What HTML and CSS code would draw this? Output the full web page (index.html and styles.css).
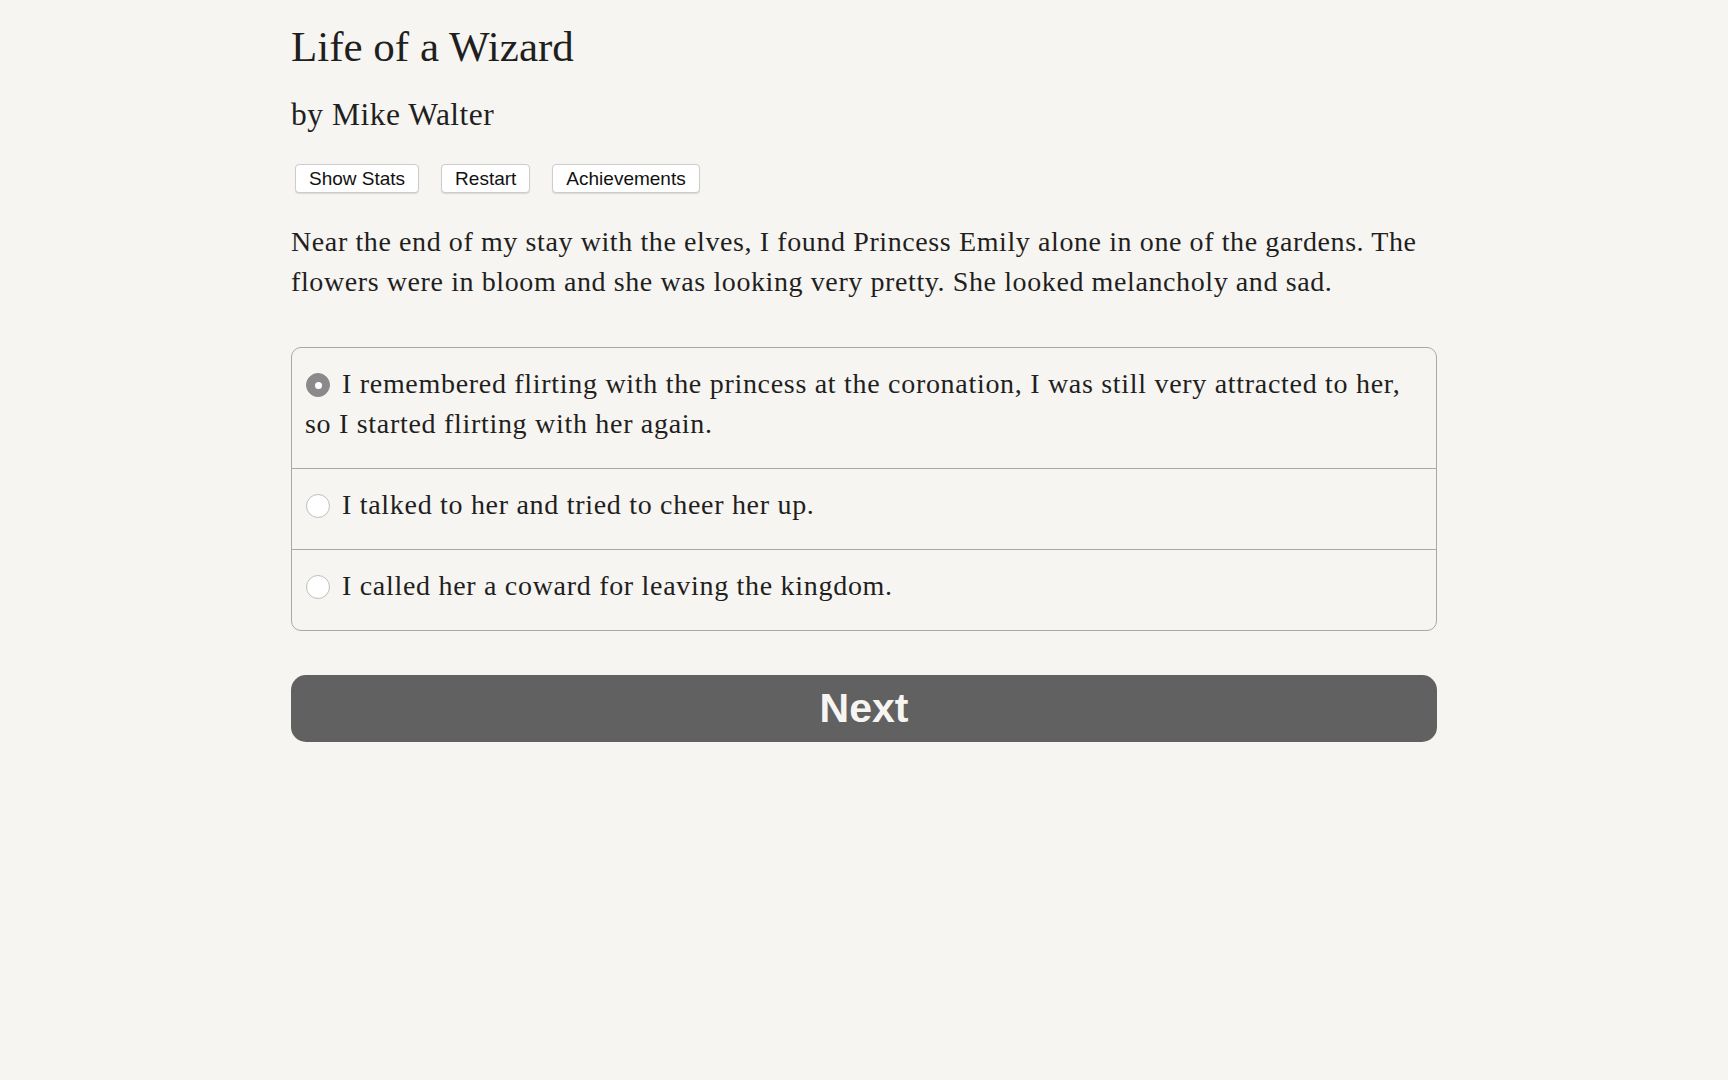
FILE: index.html
```html
<!DOCTYPE html>
<html lang="en">
<head>
<meta charset="utf-8">
<title>Life of a Wizard</title>
<link rel="stylesheet" href="styles.css">
</head>
<body>
<main class="page">
  <h1 class="title">Life of a Wizard</h1>
  <h2 class="author">by Mike Walter</h2>
  <div class="toolbar">
    <button class="tool-btn">Show Stats</button>
    <button class="tool-btn">Restart</button>
    <button class="tool-btn">Achievements</button>
  </div>
  <p class="story">Near the end of my stay with the elves, I found Princess Emily alone in one of the gardens. The flowers were in bloom and she was looking very pretty. She looked melancholy and sad.</p>
  <form class="choices">
    <label class="choice"><span class="radio checked"></span>I remembered flirting with the princess at the coronation, I was still very attracted to her, so I started flirting with her again.</label>
    <label class="choice"><span class="radio"></span>I talked to her and tried to cheer her up.</label>
    <label class="choice"><span class="radio"></span>I called her a coward for leaving the kingdom.</label>
  </form>
  <button class="next">Next</button>
</main>
</body>
</html>
```
FILE: styles.css
```css
html, body {
  margin: 0;
  padding: 0;
  background: #f7f5f1;
}
body {
  font-family: "Liberation Serif", "Times New Roman", serif;
  color: #1f1f1f;
}
.page {
  width: 1146px;
  margin: 0 auto;
  padding-top: 22px;
}
.title {
  margin: 0;
  font-size: 43px;
  line-height: 50px;
  font-weight: normal;
}
.author {
  margin: 23px 0 0;
  font-size: 31.5px;
  line-height: 40px;
  font-weight: normal;
  letter-spacing: 0.5px;
}
.toolbar {
  display: flex;
  gap: 22px;
  margin: 29px 0 0 4px;
}
.tool-btn {
  height: 29px;
  padding: 0 13px;
  font-family: "Liberation Sans", Arial, sans-serif;
  font-size: 19px;
  color: #111;
  background: #fff;
  border: 1px solid #cdcdcd;
  border-radius: 4px;
  box-shadow: 0 1px 1px rgba(0,0,0,0.12);
}
.story {
  margin: 29px 0 0;
  font-size: 28px;
  line-height: 40px;
  letter-spacing: 0.6px;
}
.choices {
  margin-top: 45px;
  border: 1px solid #a9a9a9;
  border-radius: 10px;
  overflow: hidden;
}
.choice {
  display: block;
  padding: 16px 13px 24px;
  font-size: 28px;
  line-height: 40px;
  letter-spacing: 0.7px;
  border-top: 1px solid #a9a9a9;
}
.choice:first-child {
  border-top: none;
}
.radio {
  display: inline-block;
  box-sizing: border-box;
  width: 24px;
  height: 24px;
  margin: 0 12px 0 1px;
  border-radius: 50%;
  border: 1px solid #bdbdbd;
  background: #fff;
  vertical-align: -4px;
  position: relative;
}
.radio.checked {
  border-color: #8a8a8a;
  background: #8a8a8a;
}
.radio.checked::after {
  content: "";
  position: absolute;
  left: 8px;
  top: 8px;
  width: 7px;
  height: 7px;
  border-radius: 50%;
  background: #fff;
}
.next {
  display: block;
  width: 100%;
  height: 67px;
  margin-top: 44px;
  border: none;
  border-radius: 15px;
  background: #616161;
  color: #f7f5f1;
  font-family: "Liberation Sans", Arial, sans-serif;
  font-weight: bold;
  font-size: 41px;
  padding: 0;
}
```
